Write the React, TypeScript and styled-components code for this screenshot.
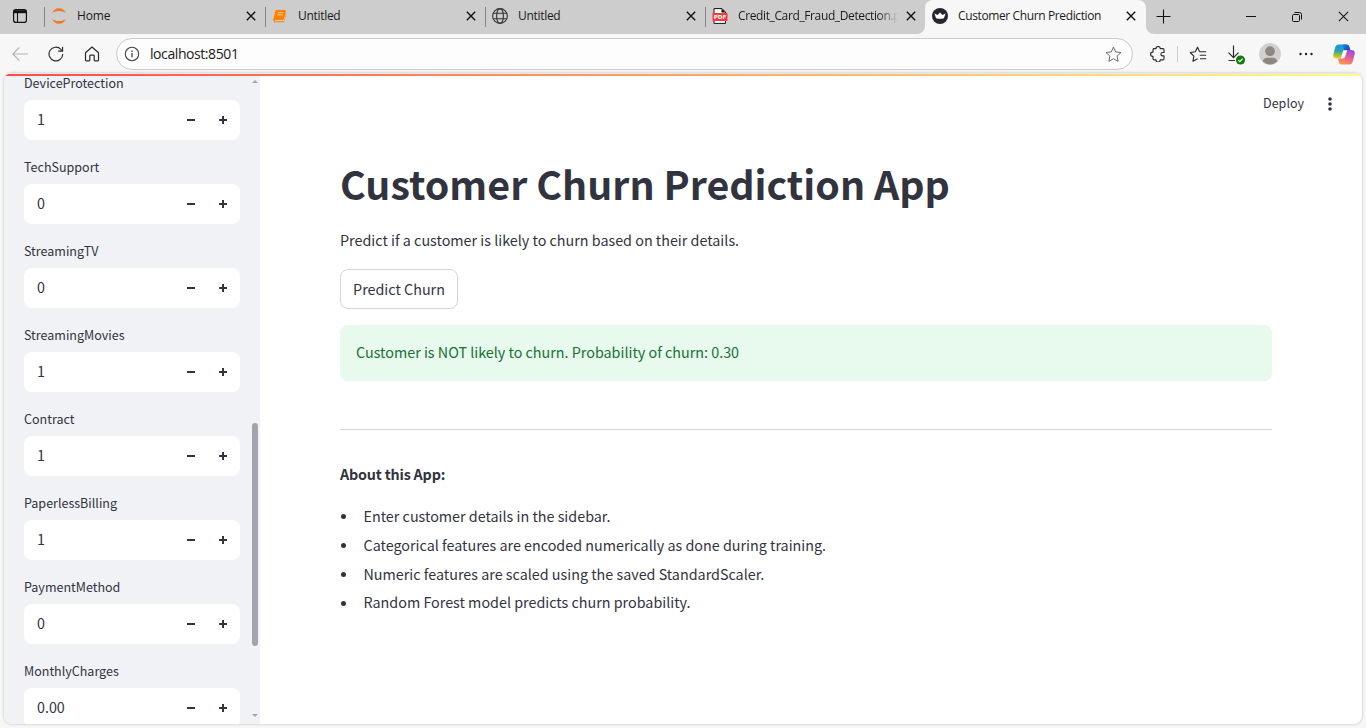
import React from 'react';
import styled, { createGlobalStyle } from 'styled-components';

const chrome = '#cdcdcd';
const surface = '#f7f7f7';
const ink = '#31333f';

const GlobalStyle = createGlobalStyle`
  * { box-sizing: border-box; }
  body { margin: 0; background: ${surface}; overflow: hidden; }
  svg { display: block; flex: none; }
`;

const Window = styled.div`
  width: 1366px;
  height: 728px;
  display: flex;
  flex-direction: column;
  background: ${surface};
  font-family: 'Noto Sans CJK SC', 'Noto Sans', sans-serif;
  color: ${ink};
  overflow: hidden;
`;

/* ---------- tab strip ---------- */
const TabStrip = styled.div`
  display: flex;
  height: 34px;
  flex: none;
  font: 12px/32px 'Open Sans', 'Noto Sans', sans-serif;
  color: #1b1b1b;
`;
const TabGroup = styled.div`
  display: flex;
  width: 925px;
  background: ${chrome};
  border-bottom-right-radius: 8px;
`;
const TabMenu = styled.div`
  width: 44px;
  padding: 9px 0 0 13px;
`;
const Tab = styled.div<{ $width?: number }>`
  display: flex;
  width: ${(p) => p.$width ?? 220}px;
  height: 34px;
  padding-right: 8px;
`;
const TabDivider = styled.i<{ $hidden?: boolean }>`
  width: 1px;
  height: 20px;
  margin-top: 7px;
  background: ${(p) => (p.$hidden ? 'transparent' : '#858585')};
`;
const TabIcon = styled.span`
  width: 32px;
  padding: 8px 0 0 6px;
`;
const TabTitle = styled.span<{ $spacing: number; $fade?: boolean }>`
  flex: 1;
  min-width: 0;
  overflow: hidden;
  white-space: nowrap;
  letter-spacing: ${(p) => p.$spacing}px;
  margin-right: 7px;
  ${(p) => p.$fade && 'mask-image: linear-gradient(90deg, #000 88%, transparent 100%);'}
`;
const TabClose = styled.span`
  width: 12px;
  padding: 11px 0 0 0.5px;
`;
const ActiveWrap = styled.div`
  width: 221px;
  background: linear-gradient(${chrome} 50%, ${surface} 50%);
`;
const ActiveTab = styled(Tab)`
  width: 221px;
  padding-right: 9px;
  background: ${surface};
  border-radius: 8px 8px 0 0;
`;
const Controls = styled.div`
  flex: 1;
  display: flex;
  background: ${chrome};
  border-bottom-left-radius: 8px;
`;
const Control = styled.span<{ $w: number; $push?: boolean }>`
  width: ${(p) => p.$w}px;
  height: 33px;
  display: flex;
  align-items: center;
  justify-content: center;
  margin-left: ${(p) => (p.$push ? 'auto' : '0')};
`;

/* ---------- toolbar ---------- */
const Toolbar = styled.div`
  display: flex;
  align-items: center;
  height: 39px;
  flex: none;
  padding: 1px 4px 0 2px;
`;
const Slot = styled.span<{ $w?: number }>`
  width: ${(p) => p.$w ?? 36}px;
  height: 36px;
  display: flex;
  align-items: center;
  justify-content: center;
`;
const AddressBar = styled.div`
  display: flex;
  align-items: center;
  width: 1017px;
  height: 32px;
  margin: 0 7px 0 6px;
  padding: 0 10px 0 7px;
  border: 1px solid #cbcbcd;
  border-radius: 16px;
  background: #fdfdfd;
`;
const Url = styled.span`
  flex: 1;
  margin-left: 10px;
  font: 14px/30px 'Open Sans', 'Noto Sans', sans-serif;
  letter-spacing: -0.42px;
  color: #1b1b1b;
`;
const ToolbarDivider = styled.i`
  width: 1px;
  height: 16px;
  margin: 0 0 0 1px;
  background: #cfcfcf;
`;

/* ---------- page ---------- */
const Page = styled.div`
  display: flex;
  flex-direction: column;
  width: 1358px;
  height: 651px;
  margin-left: 4px;
  border-radius: 8px;
  background: #fff;
  overflow: hidden;
  box-shadow: 0 0 2px 1px #d9d9db;
`;
const RainbowBar = styled.div`
  height: 3px;
  flex: none;
  border-top: 1px solid #e9e9e9;
  background: linear-gradient(90deg, #ff4b4b, #fffd80);
`;
const Body = styled.div`
  display: flex;
  flex: 1;
  min-height: 0;
`;
const Sidebar = styled.aside`
  display: flex;
  width: 256px;
  background: #f0f2f6;
  overflow: hidden;
`;
const Fields = styled.div`
  width: 248px;
  padding: 0 12px 0 20px;
`;
const Field = styled.div`
  height: 84px;
`;
const Label = styled.div`
  height: 24px;
  font-size: 12.53px;
  line-height: 14px;
`;
const NumberBox = styled.div`
  display: flex;
  align-items: center;
  height: 40px;
  padding: 0 12px 0 13px;
  border-radius: 8px;
  background: #fff;
  font-size: 14.32px;
`;
const Value = styled.span`
  flex: 1;
  height: 40px;
  line-height: 38px;
`;
const Stepper = styled.span`
  display: flex;
  gap: 22px;
`;
const ScrollTrack = styled.div`
  width: 6px;
  display: flex;
  flex-direction: column;
  justify-content: space-between;
  padding: 4px 0 7px;
`;
const ScrollThumb = styled.div`
  height: 223px;
  margin: 271px 0 -1px;
  border-radius: 3px;
  background: #a3a5ae;
`;
const Main = styled.main`
  flex: 1;
  display: flex;
  flex-direction: column;
`;
const Header = styled.header`
  display: flex;
  justify-content: flex-end;
  align-items: center;
  height: 56px;
  padding-right: 28px;
  gap: 22px;
  font-size: 12.53px;
`;
const Deploy = styled.span`
  height: 20px;
  line-height: 18px;
`;
const Content = styled.section`
  padding: 15px 90px 0 80px;
  font-size: 14.33px;
  line-height: 26px;
`;
const Title = styled.h1`
  margin: 0;
  height: 80px;
  font-size: 39.34px;
  line-height: 72px;
  font-weight: 700;
  white-space: nowrap;
`;
const Text = styled.p`
  margin: 0;
`;
const Button = styled.button`
  display: block;
  width: 118px;
  height: 40px;
  margin: 16px 0 16px;
  padding: 0;
  border: 1px solid #d6d6d9;
  border-radius: 8px;
  background: #fff;
  color: ${ink};
  font: inherit;
  white-space: nowrap;
`;
const Success = styled.div`
  height: 56px;
  padding: 14px 16px;
  border-radius: 8px;
  background: #e8f9ee;
  color: #177233;
`;
const Rule = styled.hr`
  height: 1px;
  margin: 48px 0 31px;
  border: 0;
  background: #d6d6d9;
`;
const About = styled.p`
  margin: 0 0 14.6px;
  font-weight: 700;
  letter-spacing: -0.19px;
`;
const List = styled.ul`
  margin: 0;
  padding: 0;
  list-style: none;
`;
const Item = styled.li`
  display: flex;
  align-items: center;
  height: 28.8px;
  &::before {
    content: '';
    width: 5px;
    height: 5px;
    margin: 2px 17.5px 0 1px;
    border-radius: 50%;
    background: ${ink};
  }
`;

const CloseIcon = ({ size = 10, stroke = 1.4 }: { size?: number; stroke?: number }) => (
  <svg width={size} height={size} viewBox="0 0 10 10" stroke="#111" strokeWidth={stroke} fill="none">
    <path d="M.8.8l8.4 8.4M9.2.8L.8 9.2" />
  </svg>
);
const TabMenuIcon = () => (
  <svg width="14" height="14" viewBox="0 0 14 14" fill="none" stroke="#111">
    <rect x=".6" y=".6" width="12.8" height="12.8" rx="2.2" strokeWidth="1.2" />
    <path d="M1 1.2h12v3H1z" fill="#111" stroke="none" />
    <path d="M4.5 4v9.5" strokeWidth="1.1" />
  </svg>
);
const JupyterIcon = () => (
  <svg width="16" height="16" viewBox="0 0 16 16" fill="#f37726">
    <path d="M1 5.3C2.300 2.200 4.800.3 8 .3s5.700 1.900 7 5C13.300 3.700 10.900 2.900 8 2.900S2.700 3.700 1 5.300z" />
    <path d="M1 10.700c1.300 3.100 3.800 5 7 5s5.700-1.900 7-5c-1.700 1.600-4.100 2.400-7 2.400s-5.300-.8-7-2.400z" />
  </svg>
);
const BookIcon = () => (
  <svg width="16" height="16" viewBox="0 0 16 16">
    <path d="M4.700 2h8.200q1.300 0 1 1.200L12 11q-.3 1-1.200 1H3q-.8.600 0 1.200h8.300q.8 0 1-.8L14 5.500q.5.500.2 1.400L12.500 13q-.4 1.200-1.500 1.200H2.600Q1 13.500 1.200 12L3.200 3.300Q3.600 2 4.700 2z" fill="#ff8000" />
    <path d="M6 4.700h5.500M5.500 6.800H11" stroke="#ffd6a3" strokeWidth=".9" />
  </svg>
);
const GlobeIcon = () => (
  <svg width="16" height="16" viewBox="0 0 16 16" fill="none" stroke="#333" strokeWidth="1.1">
    <circle cx="8" cy="8" r="7.400" />
    <ellipse cx="8" cy="8" rx="3.400" ry="7.400" />
    <path d="M1.300 5.300h13.400M1.300 10.700h13.400" />
  </svg>
);
const PdfIcon = () => (
  <svg width="16" height="16" viewBox="0 0 16 16">
    <path d="M2 .6h8l3.500 3.500v11.300H2z" fill="#fff" stroke="#111" />
    <path d="M9.500.6v4h4z" fill="#111" />
    <rect x=".5" y="5" width="15" height="8" rx=".6" fill="#f8383c" />
    <text x="8" y="11.200" textAnchor="middle" fontFamily="DejaVu Sans, sans-serif" fontWeight="700" fontSize="5.600" fill="#fff">PDF</text>
  </svg>
);
const CrownIcon = () => (
  <svg width="16" height="16" viewBox="0 0 16 16">
    <circle cx="8" cy="8" r="8" fill="#262730" />
    <path d="M2.400 5.600l3.200 1.300L8 4.500l2.400 2.400 3.200-1.300-1.700 4.600q-3.900 1.300-7.800 0z" fill="#fff" />
  </svg>
);
const BackIcon = () => (
  <svg width="16" height="14" viewBox="0 0 16 14" fill="none" stroke="#b4b4b4" strokeWidth="1.100">
    <path d="M16 7H.8M7.300.5L.8 7l6.500 6.500" />
  </svg>
);
const ReloadIcon = () => (
  <svg width="16" height="16" viewBox="0 0 17 17" fill="none" stroke="#2b2b2b" strokeWidth="1.200">
    <path d="M15.700 8.500A7.300 7.300 0 1 1 13.700 3.500L15.200 5.200" />
    <path d="M15.500.8v4.700h-4.700" />
  </svg>
);
const HomeIcon = () => (
  <svg width="16" height="16" viewBox="0 0 16 16" fill="none" stroke="#2b2b2b" strokeWidth="1.200" strokeLinejoin="round">
    <path d="M1.500 6.700L8 1l6.500 5.700v7.200q0 1-1 1H11q-.8 0-.8-.8V10q0-.8-.8-.8H6.600q-.8 0-.8.8v4.100q0 .8-.8.800H2.500q-1 0-1-1z" />
  </svg>
);
const InfoIcon = () => (
  <svg width="16" height="16" viewBox="0 0 16 16" fill="none" stroke="#444" strokeWidth="1.100">
    <circle cx="8" cy="8" r="6.700" />
    <path d="M8 7v4.300M8 4.600v1.300" strokeWidth="1.300" />
  </svg>
);
const StarIcon = () => (
  <svg width="17" height="17" viewBox="0 0 17 17" fill="none" stroke="#6a6a6a" strokeLinejoin="round">
    <path d="M8.500 1l2.200 4.900 5.300.6-3.900 3.600 1 5.300-4.600-2.700-4.600 2.700 1-5.300L1 6.500l5.300-.6z" />
  </svg>
);
const PuzzleIcon = () => (
  <svg width="16" height="16" viewBox="0 0 16 16" fill="none" stroke="#2b2b2b" strokeWidth="1.150" strokeLinejoin="round">
    <path d="M3.500 2.600H6a2.100 2.100 0 0 1 4.200 0h2.600q1.200 0 1.200 1.200v2.700h-1.400a1.700 1.700 0 0 0 0 3.400H14v2.800q0 1.200-1.200 1.200h-2.600a2.100 2.100 0 0 1-4.200 0H4.200Q3 13.900 3 12.700v-2.400h-.3a2.100 2.100 0 0 1 0-4.200H3V3.800q0-1.200 1.200-1.200z" />
  </svg>
);
const FavoritesIcon = () => (
  <svg width="18" height="17" viewBox="0 0 18 17" fill="none" stroke="#2b2b2b" strokeWidth="1.150" strokeLinejoin="round">
    <path d="M10.600 5.700L8.500 1.200 6.300 5.800 1.200 6.500l3.700 3.600-1 5.200 4.700-2.500" />
    <path d="M10.300 5.700h6.900M10.700 9.200h6.500M11 12.700h6.200" />
  </svg>
);
const DownloadIcon = () => (
  <svg width="20" height="22" viewBox="0 0 20 22" fill="none" stroke="#2b2b2b" strokeWidth="1.200">
    <path d="M7.500 2.500v12M2.500 9.700l5 5 5-5M2.500 17.500H9" />
    <circle cx="14.500" cy="17" r="4.600" fill="#107c10" stroke="none" />
    <path d="M12.300 17.100l1.500 1.500 2.900-3" stroke="#fff" />
  </svg>
);
const AvatarIcon = () => (
  <svg width="22" height="22" viewBox="0 0 23 23">
    <circle cx="11.500" cy="11.500" r="11.400" fill="#d2d0ce" />
    <circle cx="11.500" cy="8.600" r="5.100" fill="#8d8783" />
    <path d="M3.700 19.200q1.300-3.900 5-3.900h5.600q3.700 0 5 3.900a11.200 11.200 0 0 1-15.600 0z" fill="#8d8783" />
  </svg>
);
const DotsIcon = () => (
  <svg width="14" height="4" viewBox="0 0 14 4" fill="#222">
    <circle cx="1.500" cy="2" r="1.200" />
    <circle cx="7" cy="2" r="1.200" />
    <circle cx="12.500" cy="2" r="1.200" />
  </svg>
);
const CopilotIcon = () => (
  <svg width="22" height="21" viewBox="0 0 22 21">
    <defs>
      <linearGradient id="coolSide" x1=".4" y1="0" x2=".3" y2="1">
        <stop offset="0" stopColor="#1596e8" />
        <stop offset=".45" stopColor="#2f9fb5" />
        <stop offset=".75" stopColor="#8fc33f" />
        <stop offset="1" stopColor="#ffc914" />
      </linearGradient>
      <linearGradient id="warmSide" x1=".7" y1="0" x2=".3" y2="1">
        <stop offset="0" stopColor="#9b4de0" />
        <stop offset=".5" stopColor="#e55f9b" />
        <stop offset="1" stopColor="#ff9a3d" />
      </linearGradient>
      <linearGradient id="topFold" x1="0" y1="0" x2="1" y2=".6">
        <stop offset="0" stopColor="#168be5" />
        <stop offset="1" stopColor="#1745b8" />
      </linearGradient>
    </defs>
    <path d="M5.500.5h8q2 0 2.700 2l1 3.500h-3.500q-2 0-2.600 2L9 14.500H3.500Q-.5 14.500.4 10L2.300 3Q3.100.5 5.500.5z" fill="url(#coolSide)" />
    <path d="M9.500.5h4q2 0 2.700 2l1 3.500h-3.500q-1.500 0-2.300 1z" fill="url(#topFold)" />
    <path d="M16.500 20.500h-8q-2 0-2.500-1.800L5 14.500h3q2 0 2.600-2L12.700 6h5.800q4 0 3.100 4.500l-1.900 7.300q-.8 2.700-3.200 2.700z" fill="url(#warmSide)" />
    <path d="M10.300 6.300h3.900L12.200 12.500q-.6 2-2.300 2H7.800z" fill="#fbfbfb" />
  </svg>
);
const Minus = () => (
  <svg width="10" height="10" viewBox="0 0 10 10"><path d="M1 4h8v2H1z" fill={ink} /></svg>
);
const Plus = () => (
  <svg width="10" height="10" viewBox="0 0 10 10"><path d="M1 4h3V1h2v3h3v2H6v3H4V6H1z" fill={ink} /></svg>
);
const KebabIcon = () => (
  <svg width="8" height="14" viewBox="0 0 8 14" fill={ink}>
    <circle cx="4" cy="2" r="1.800" />
    <circle cx="4" cy="7" r="1.800" />
    <circle cx="4" cy="12" r="1.800" />
  </svg>
);

const tabs = [
  { title: 'Home', icon: <JupyterIcon />, width: 221, spacing: -0.15 },
  { title: 'Untitled', icon: <BookIcon />, spacing: -0.3 },
  { title: 'Untitled', icon: <GlobeIcon />, spacing: -0.3 },
  { title: 'Credit_Card_Fraud_Detection.pdf', icon: <PdfIcon />, spacing: -0.38, fade: true },
];

const fields = [
  ['DeviceProtection', '1'],
  ['TechSupport', '0'],
  ['StreamingTV', '0'],
  ['StreamingMovies', '1'],
  ['Contract', '1'],
  ['PaperlessBilling', '1'],
  ['PaymentMethod', '0'],
  ['MonthlyCharges', '0.00'],
];

const notes = [
  'Enter customer details in the sidebar.',
  'Categorical features are encoded numerically as done during training.',
  'Numeric features are scaled using the saved StandardScaler.',
  'Random Forest model predicts churn probability.',
];

export default function App() {
  return (
    <Window>
      <GlobalStyle />
      <TabStrip>
        <TabGroup>
          <TabMenu><TabMenuIcon /></TabMenu>
          {tabs.map((t, i) => (
            <Tab key={i} $width={t.width}>
              <TabDivider />
              <TabIcon>{t.icon}</TabIcon>
              <TabTitle $spacing={t.spacing} $fade={t.fade}>{t.title}</TabTitle>
              <TabClose><CloseIcon /></TabClose>
            </Tab>
          ))}
        </TabGroup>
        <ActiveWrap>
          <ActiveTab>
            <TabDivider $hidden />
            <TabIcon><CrownIcon /></TabIcon>
            <TabTitle $spacing={-0.38}>Customer Churn Prediction</TabTitle>
            <TabClose><CloseIcon /></TabClose>
          </ActiveTab>
        </ActiveWrap>
        <Controls>
          <Control $w={35}>
            <svg width="15" height="15" viewBox="0 0 15 15" stroke="#111" strokeWidth="1.100"><path d="M7.500.5v14M.5 7.500h14" /></svg>
          </Control>
          <Control $w={46} $push>
            <svg width="10" height="2" viewBox="0 0 10 2"><path d="M0 0h10v1H0z" fill="#111" /></svg>
          </Control>
          <Control $w={46}>
            <svg width="10" height="10" viewBox="0 0 10 10" fill="none" stroke="#111">
              <rect x=".5" y="2.500" width="7" height="7" rx="1.200" />
              <path d="M2.500.5H7.500q2 0 2 2v5" />
            </svg>
          </Control>
          <Control $w={46}><CloseIcon size={11} stroke={0.95} /></Control>
        </Controls>
      </TabStrip>

      <Toolbar>
        <Slot><BackIcon /></Slot>
        <Slot><ReloadIcon /></Slot>
        <Slot><HomeIcon /></Slot>
        <AddressBar>
          <InfoIcon />
          <Url>localhost:8501</Url>
          <StarIcon />
        </AddressBar>
        <Slot><PuzzleIcon /></Slot>
        <ToolbarDivider />
        <Slot $w={40}><FavoritesIcon /></Slot>
        <Slot><DownloadIcon /></Slot>
        <Slot $w={32}><AvatarIcon /></Slot>
        <Slot $w={40}><DotsIcon /></Slot>
        <Slot><CopilotIcon /></Slot>
      </Toolbar>

      <Page>
        <RainbowBar />
        <Body>
          <Sidebar>
            <Fields>
              {fields.map(([name, value]) => (
                <Field key={name}>
                  <Label>{name}</Label>
                  <NumberBox>
                    <Value>{value}</Value>
                    <Stepper><Minus /><Plus /></Stepper>
                  </NumberBox>
                </Field>
              ))}
            </Fields>
            <ScrollTrack>
              <svg width="6" height="3" viewBox="0 0 6 3"><path d="M0 3l3-3 3 3z" fill="#a3a5ae" /></svg>
              <ScrollThumb />
              <svg width="6" height="3" viewBox="0 0 6 3"><path d="M0 0l3 3 3-3z" fill="#a3a5ae" /></svg>
            </ScrollTrack>
          </Sidebar>
          <Main>
            <Header>
              <Deploy>Deploy</Deploy>
              <KebabIcon />
            </Header>
            <Content>
              <Title>Customer Churn Prediction App</Title>
              <Text>Predict if a customer is likely to churn based on their details.</Text>
              <Button>Predict Churn</Button>
              <Success>Customer is NOT likely to churn. Probability of churn: 0.30</Success>
              <Rule />
              <About>About this App:</About>
              <List>
                {notes.map((n) => <Item key={n}>{n}</Item>)}
              </List>
            </Content>
          </Main>
        </Body>
      </Page>
    </Window>
  );
}
